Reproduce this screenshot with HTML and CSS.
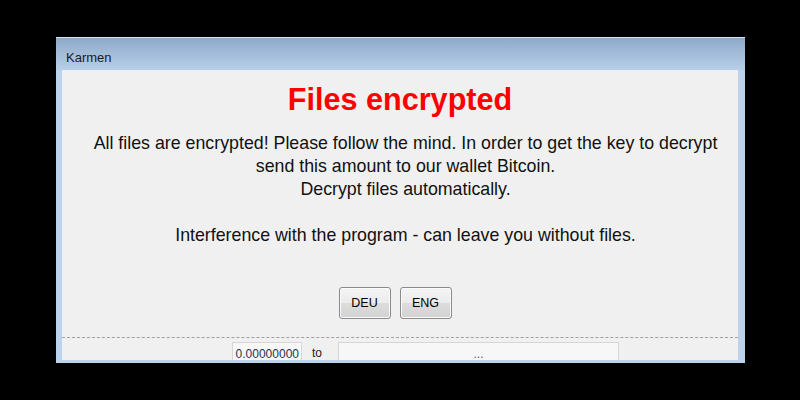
FILE: index.html
```html
<!DOCTYPE html>
<html>
<head>
<meta charset="utf-8">
<link rel="stylesheet" href="styles.css">
</head>
<body>
<div class="window">
  <div class="titlebar">Karmen</div>
  <div class="client">
    <h1 class="heading">Files encrypted</h1>
    <p class="message">All files are encrypted! Please follow the mind. In order to get the key to decrypt<br>send this amount to our wallet Bitcoin.<br>Decrypt files automatically.<br><br>Interference with the program - can leave you without files.</p>
    <div class="buttons">
      <button class="btn">DEU</button>
      <button class="btn">ENG</button>
    </div>
    <div class="divider"></div>
    <div class="status">
      <div class="field amount">0.00000000</div>
      <div class="to">to</div>
      <div class="field addr">...</div>
    </div>
  </div>
</div>
</body>
</html>
```
FILE: styles.css
```css
html, body {
  margin: 0;
  padding: 0;
  background: #000;
  width: 800px;
  height: 400px;
  overflow: hidden;
}
.window {
  margin: 37px 0 0 56px;
  width: 689px;
  height: 326px;
  box-sizing: border-box;
  padding: 0 7px 3px 6px;
  display: flex;
  flex-direction: column;
  border-top: 1px solid #d9e0e8;
  background: linear-gradient(to bottom, #8eaac9 0px, #b7cfe8 32px, #bcd3eb 33px, #bcd3eb 100%);
}
.titlebar {
  height: 32px;
  box-sizing: border-box;
  display: flex;
  align-items: center;
  padding: 6px 0 0 4px;
  font-family: "Liberation Sans", Arial, sans-serif;
  font-size: 13px;
  color: #1b1b1b;
}
.client {
  flex: 1;
  background: #f0f0f0;
  display: flex;
  flex-direction: column;
  align-items: center;
  padding-top: 12px;
  overflow: hidden;
  font-family: "Liberation Sans", Arial, sans-serif;
}
.heading {
  margin: 0;
  font-size: 30.6px;
  line-height: 34px;
  font-weight: bold;
  color: #ff0000;
}
.message {
  margin: 16px 0 0 11px;
  font-size: 17.8px;
  line-height: 23px;
  text-align: center;
  color: #111;
  white-space: nowrap;
}
.buttons {
  margin-top: 40px;
  margin-right: 10px;
  display: flex;
  gap: 9px;
}
.btn {
  width: 52px;
  height: 32px;
  padding: 0;
  border: 1px solid #8a8a8a;
  border-radius: 3px;
  background: linear-gradient(to bottom, #f4f4f4 0%, #ebebeb 50%, #dddddd 51%, #d2d2d2 100%);
  box-shadow: inset 0 0 0 1px #fbfbfb;
  font-family: "Liberation Sans", Arial, sans-serif;
  font-size: 12.5px;
  color: #000;
}
.divider {
  align-self: stretch;
  margin-top: 18px;
  border-top: 1px dashed #a0a0a0;
}
.status {
  align-self: stretch;
  display: flex;
  align-items: flex-start;
  margin-top: 4px;
  padding-left: 170px;
  font-size: 12px;
}
.field {
  height: 22px;
  box-sizing: border-box;
  border: 1px solid #d6d6d6;
  border-bottom: none;
  background: #f7f7f7;
  line-height: 18px;
  padding-top: 2px;
}
.amount {
  width: 70px;
  text-align: right;
  padding-right: 2px;
  color: #1f3350;
}
.to {
  margin-left: 10px;
  width: 26px;
  line-height: 22px;
  color: #222;
}
.addr {
  width: 281px;
  text-align: center;
  color: #555;
}
```
